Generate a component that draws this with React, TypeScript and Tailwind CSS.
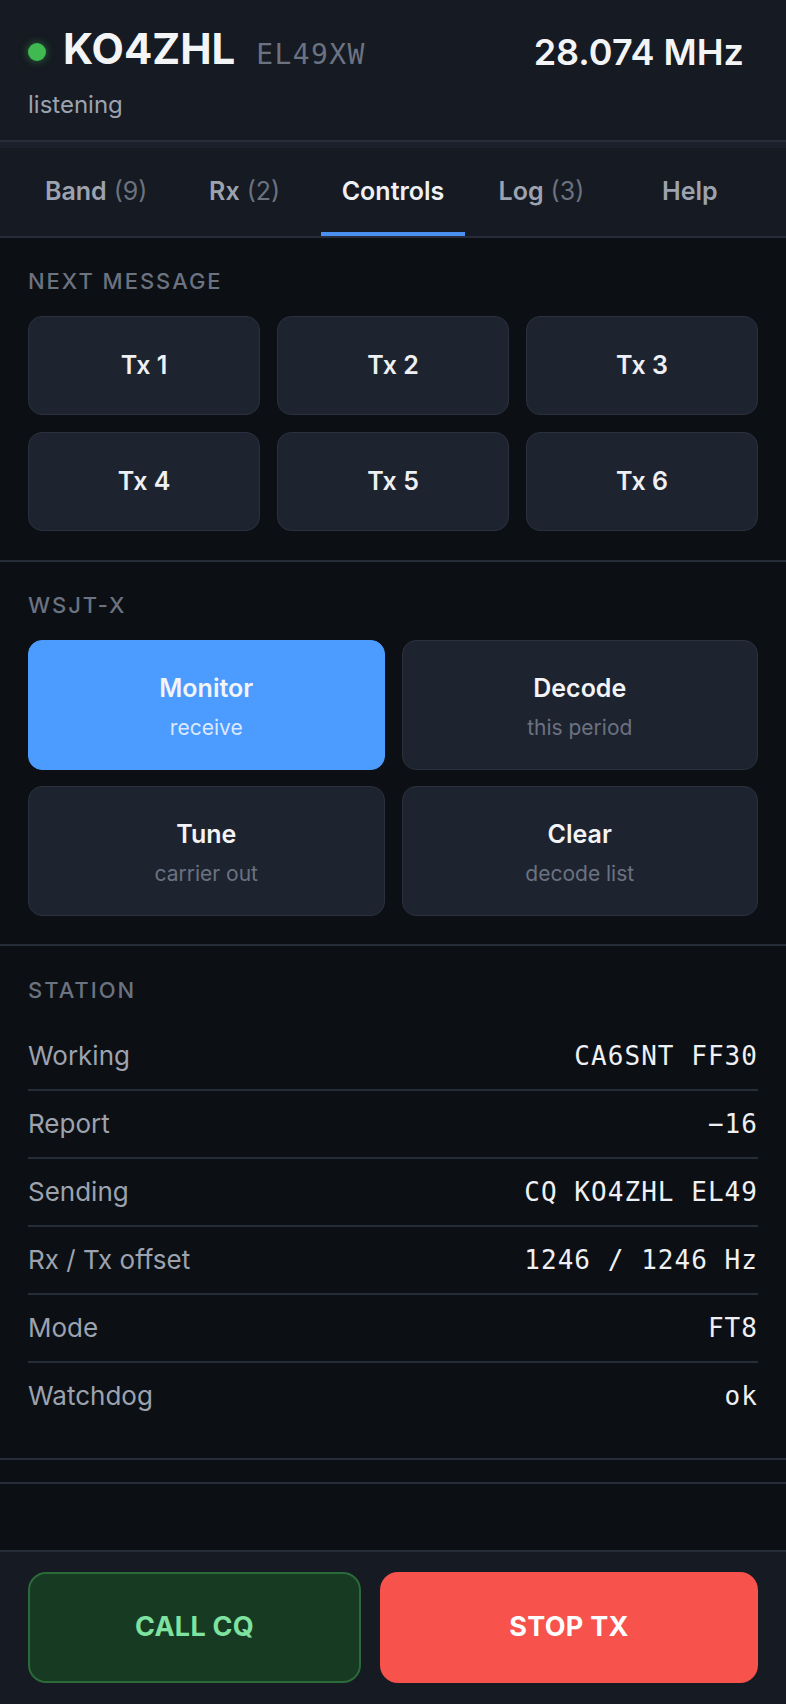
import React from 'react';

const sans = { fontFamily: 'Inter, "Noto Sans", sans-serif' };

const tabs = [
  { label: 'Band', count: 9 },
  { label: 'Rx', count: 2 },
  { label: 'Controls', active: true },
  { label: 'Log', count: 3 },
  { label: 'Help' },
];

const wsjtx = [
  { title: 'Monitor', sub: 'receive', on: true },
  { title: 'Decode', sub: 'this period' },
  { title: 'Tune', sub: 'carrier out' },
  { title: 'Clear', sub: 'decode list' },
];

const station = [
  ['Working', 'CA6SNT FF30'],
  ['Report', '\u221216'],
  ['Sending', 'CQ KO4ZHL EL49'],
  ['Rx / Tx offset', '1246 / 1246 Hz'],
  ['Mode', 'FT8'],
  ['Watchdog', 'ok'],
];

const SectionLabel = ({ children, mb = 'mb-[18px]' }: { children: React.ReactNode; mb?: string }) => (
  <div className={`text-[22px] leading-[33px] font-medium tracking-[0.09em] text-[#6b7280] uppercase ${mb}`}>
    {children}
  </div>
);

export default function App() {
  return (
    <div style={sans} className="h-screen w-full flex flex-col bg-[#0c0f14] text-[#e8eaed] overflow-hidden">
      {/* header */}
      <div className="h-[140px] shrink-0 bg-[#161a22] pl-7 pr-[42px] pt-[32px]">
        <div className="flex items-center justify-between h-[40px]">
          <div className="flex items-center">
            <span className="w-[18px] h-[18px] rounded-full bg-[#3fb950] shadow-[0_0_8px_rgba(63,185,80,0.55)]" />
            <div className="flex items-baseline ml-[17px]">
              <span className="text-[42px] leading-[40px] font-bold text-[#f3f4f6]">KO4ZHL</span>
              <span
                className="ml-[21px] text-[28px] tracking-[0.05em] text-[#6b7280]"
                style={{ fontFamily: '"DejaVu Sans Mono", monospace' }}
              >
                EL49XW
              </span>
            </div>
          </div>
          <span className="text-[36px] leading-[40px] font-semibold text-[#f3f4f6]">28.074 MHz</span>
        </div>
        <div className="mt-[15px] text-[24px] leading-[36px] text-[#9ca3af]">listening</div>
      </div>
      <div className="h-[8px] shrink-0 border-t-2 border-[#262c38] bg-[#1b202a]" />

      {/* tabs */}
      <div className="h-[90px] shrink-0 bg-[#161a22] border-b-2 border-[#262c38] flex px-6 gap-1">
        {tabs.map((t) => (
          <div key={t.label} className="relative flex-1 flex items-center justify-center">
            <span
              className={`text-[25px] font-semibold ${t.active ? 'text-[#eef0f3]' : 'text-[#9ca3af]'}`}
            >
              {t.label}
              {t.count !== undefined && (
                <span className="font-normal text-[#6b7280]"> ({t.count})</span>
              )}
            </span>
            {t.active && <span className="absolute left-0 right-0 bottom-0 h-[4px] bg-[#4a90f0]" />}
          </div>
        ))}
      </div>

      {/* content */}
      <div className="flex-1 flex flex-col">
        <section className="px-7 pt-[27px] pb-[29px] border-b-2 border-[#262c38]">
          <SectionLabel>Next message</SectionLabel>
          <div className="grid grid-cols-3 gap-[17px]">
            {[1, 2, 3, 4, 5, 6].map((n) => (
              <button
                key={n}
                className="h-[99px] rounded-[14px] bg-[#1e2330] border-[1.5px] border-[#2a303d] text-[25px] font-semibold text-[#eef0f3]"
              >
                Tx {n}
              </button>
            ))}
          </div>
        </section>

        <section className="px-7 pt-[27px] pb-[28px] border-b-2 border-[#262c38]">
          <SectionLabel>WSJT-X</SectionLabel>
          <div className="grid grid-cols-2 gap-x-[17px] gap-y-[16px]">
            {wsjtx.map((b) => (
              <button
                key={b.title}
                className={`h-[130px] pt-[5px] rounded-[14px] flex flex-col items-center justify-center ${
                  b.on
                    ? 'bg-[#4c9bff] border-[1.5px] border-[#4c9bff]'
                    : 'bg-[#1e2330] border-[1.5px] border-[#2a303d]'
                }`}
              >
                <span className="text-[25px] leading-[30px] font-semibold text-[#f3f4f6]">{b.title}</span>
                <span
                  className={`mt-[11px] text-[21px] leading-[28px] ${b.on ? 'text-[#dbe9ff]' : 'text-[#6b7280]'}`}
                >
                  {b.sub}
                </span>
              </button>
            ))}
          </div>
        </section>

        <section className="px-7 pt-[28px] pb-[29px] border-b-2 border-[#262c38]">
          <SectionLabel mb="mb-[16px]">Station</SectionLabel>
          {station.map(([k, v], i) => (
            <div
              key={k}
              className={`flex items-center justify-between py-[14px] ${
                i < station.length - 1 ? 'border-b-2 border-[#262c38]' : ''
              }`}
            >
              <span className="text-[26px] leading-[38px] text-[#9ca3af]">{k}</span>
              <span
                className="text-[26px] leading-[38px] tracking-[0.04em] text-[#eef0f3] whitespace-pre"
                style={{ fontFamily: '"DejaVu Sans Mono", monospace' }}
              >
                {v}
              </span>
            </div>
          ))}
        </section>

        <section className="h-[24px] border-b-2 border-[#262c38]" />
      </div>

      {/* bottom bar */}
      <div className="h-[154px] shrink-0 bg-[#161a22] border-t-2 border-[#262c38] px-7 pt-[20px] flex gap-[19px]">
        <button className="w-[333px] h-[111px] rounded-[18px] bg-[#173a22] border-2 border-[#2b6a39] text-[27px] font-bold tracking-[0.01em] text-[#7ee2a0]">
          CALL CQ
        </button>
        <button className="flex-1 h-[111px] rounded-[18px] bg-[#f8524d] text-[27px] font-bold tracking-[0.01em] text-white">
          STOP TX
        </button>
      </div>
    </div>
  );
}
